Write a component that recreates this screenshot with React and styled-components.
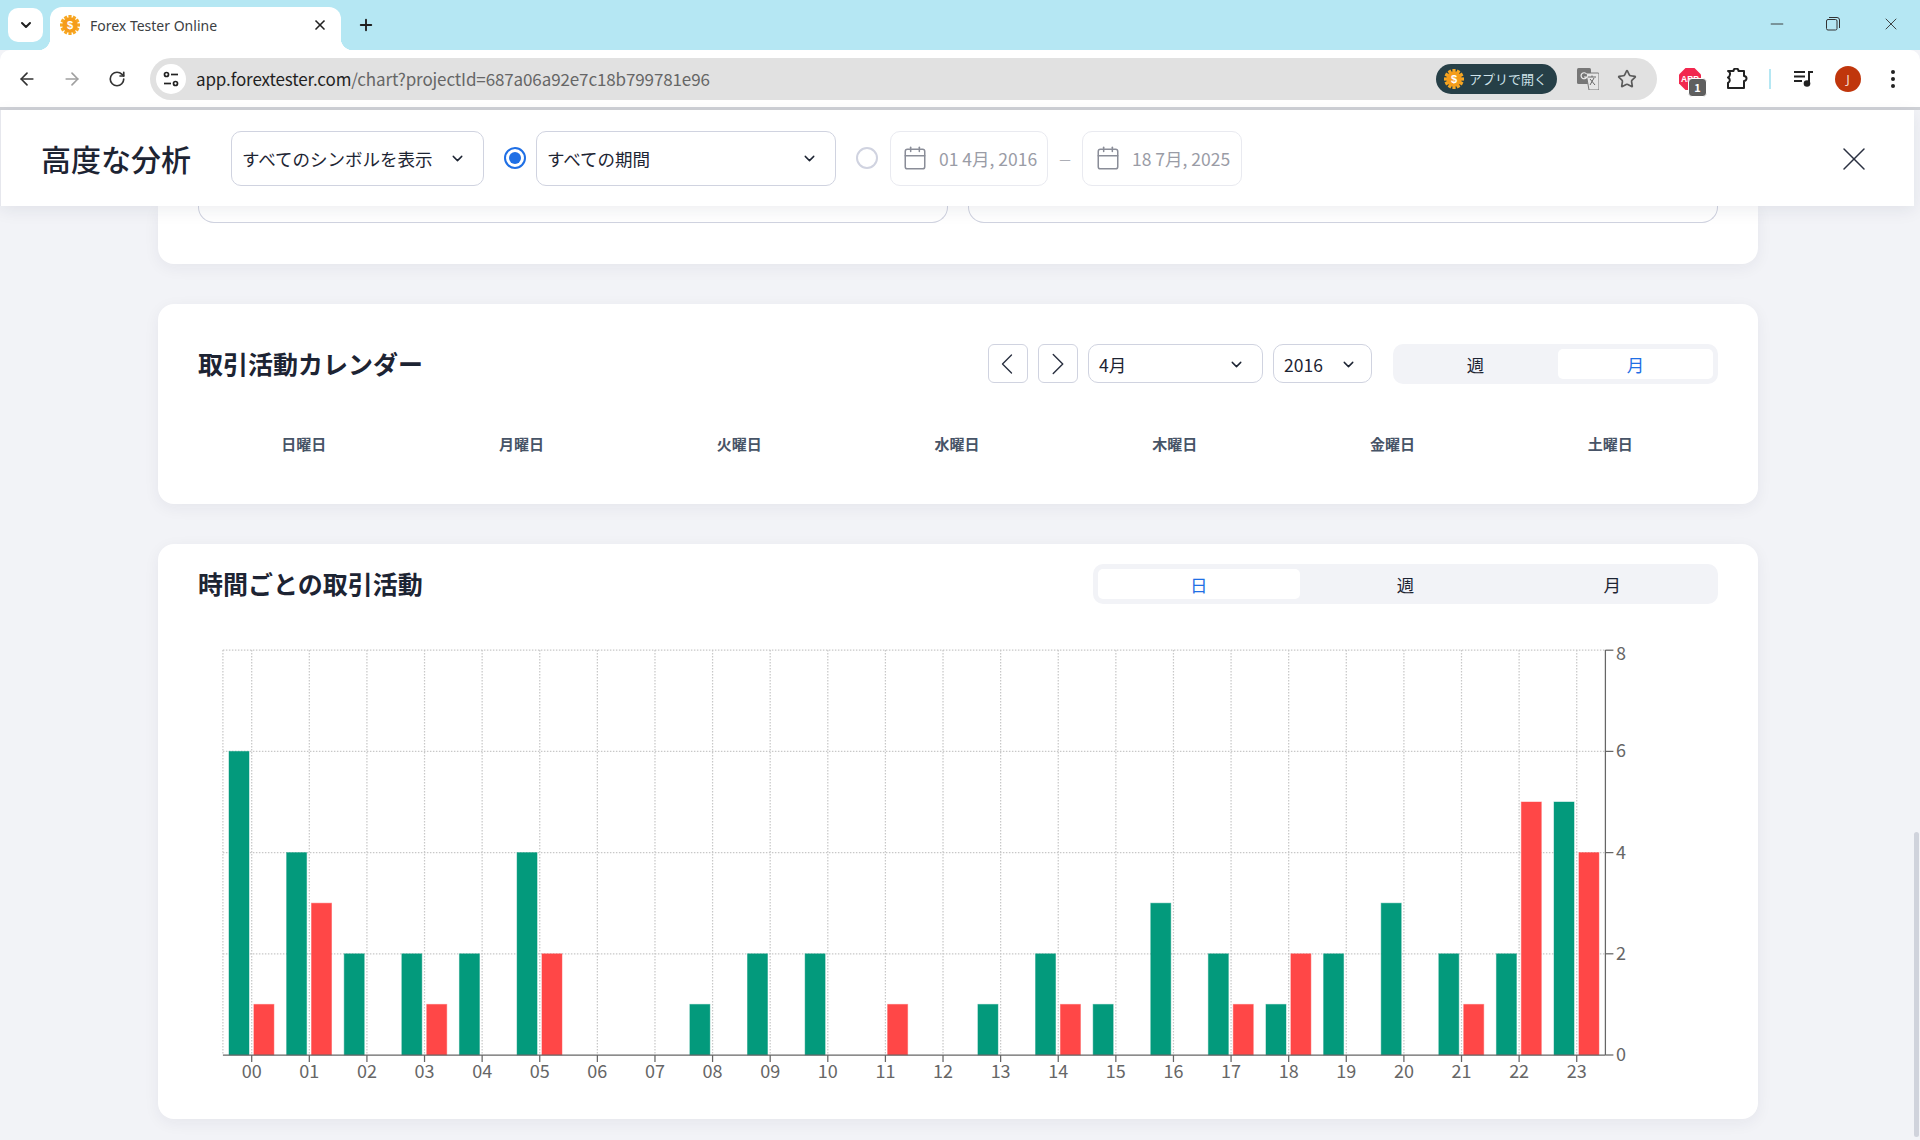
import React from 'react';
import styled, { createGlobalStyle } from 'styled-components';
import { ArrowLeft, ArrowRight, RotateCw, Star, X, Plus, ChevronDown, ChevronLeft, ChevronRight, Calendar, Minus } from 'lucide-react';

const FONT = '"Noto Sans CJK JP", "Noto Sans", sans-serif';

const GlobalStyle = createGlobalStyle`
  html, body { margin: 0; padding: 0; background: #f2f3f7; }
  body { font-family: ${FONT}; color: #1d2433; }
  * { box-sizing: border-box; }
`;

// -------------------------------------------------------------------------
// Browser chrome

const Page = styled.div`
  position: relative;
  width: 1920px;
  height: 1140px;
  overflow: hidden;
  display: flex;
  flex-direction: column;
  background: #f2f3f7;
`;

const TabStrip = styled.div`
  height: 50px;
  flex: none;
  background: #b5e7f3;
  display: flex;
  align-items: flex-end;
  padding-left: 8px;
`;

const TabListButton = styled.div`
  width: 35px;
  height: 34px;
  margin-bottom: 8px;
  background: #fff;
  border-radius: 10px;
  display: flex;
  align-items: center;
  justify-content: center;
  color: #1f1f1f;
`;

const Tab = styled.div`
  position: relative;
  width: 291px;
  height: 43px;
  margin-left: 7px;
  background: #fff;
  border-radius: 12px 12px 0 0;
  display: flex;
  align-items: center;
  padding: 0 13px 7px 10px;
  font-family: "Noto Sans", sans-serif;
  font-size: 14px;
  color: #3c4043;

  &::before,
  &::after {
    content: "";
    position: absolute;
    bottom: 0;
    width: 12px;
    height: 12px;
  }

  &::before {
    left: -12px;
    background: radial-gradient(circle at 0 0, transparent 12px, #fff 12.5px);
  }

  &::after {
    right: -12px;
    background: radial-gradient(circle at 100% 0, transparent 12px, #fff 12.5px);
  }
`;

const TabTitle = styled.span`
  flex: 1;
  margin-left: 10px;
`;

const NewTab = styled.div`
  margin: 0 0 14px 16px;
  height: 22px;
  display: flex;
  align-items: center;
  color: #1f1f1f;
`;

const WindowControls = styled.div`
  margin-left: auto;
  height: 50px;
  display: flex;
  align-items: center;
  padding: 0 19px 3px 0;
  color: #333;
`;

const WindowIcon = styled.div`
  display: flex;
  margin-left: ${(p) => p.$gap}px;
`;

const Toolbar = styled.div`
  height: 57px;
  flex: none;
  background: #fff;
  border-radius: 10px 10px 0 0;
  display: flex;
  align-items: center;
  padding-left: 17px;
`;

const NavIcon = styled.div`
  width: 20px;
  margin-right: ${(p) => p.$gap}px;
  display: flex;
  justify-content: center;
  color: ${(p) => (p.$off ? '#a0a0a0' : '#333')};
`;

const Omnibox = styled.div`
  width: 1507px;
  height: 42px;
  flex: none;
  margin-left: 23px;
  padding: 0 6px 0 6px;
  border-radius: 21px;
  background: #e1e1e1;
  display: flex;
  align-items: center;
`;

const SiteButton = styled.div`
  width: 30px;
  height: 30px;
  border-radius: 50%;
  background: #fff;
  display: flex;
  align-items: center;
  justify-content: center;
`;

const Url = styled.div`
  margin-left: 10px;
  font-size: 17px;
  color: #666;
  letter-spacing: -0.12px;

  b {
    font-weight: 400;
    color: #1f1f1f;
  }
`;

const OpenAppPill = styled.div`
  margin-left: auto;
  width: 121px;
  height: 30px;
  border-radius: 15px;
  background: #263f47;
  color: #cfe3ea;
  font-size: 13px;
  display: flex;
  align-items: center;
  padding-left: 8px;
  gap: 5px;
  white-space: nowrap;
`;

const OmniIcon = styled.div`
  margin-left: ${(p) => p.$gap}px;
  display: flex;
  color: #5a5a5a;
`;

const Extensions = styled.div`
  flex: 1;
  display: flex;
  align-items: center;
  color: #222;
`;

const AbpWrap = styled.div`
  position: relative;
  width: 22px;
  height: 22px;
  margin-left: 22px;
`;

const AbpBadge = styled.div`
  position: absolute;
  left: 9px;
  top: 10px;
  width: 19px;
  height: 19px;
  border-radius: 4px;
  background: #5f5f5f;
  border: 1px solid #fff;
  color: #fff;
  font-size: 11px;
  font-weight: 700;
  line-height: 17px;
  text-align: center;
`;

const AbpLabel = styled.text`
  font-family: "Liberation Sans", sans-serif;
  font-weight: 700;
  font-size: 8.5px;
  fill: #fff;
`;

const FaviconLabel = styled.text`
  font-family: "Liberation Sans", sans-serif;
  font-weight: 700;
  font-size: 11px;
  fill: #fff;
`;

const ExtSlot = styled.div`
  margin-left: ${(p) => p.$gap}px;
  display: flex;
`;

const BlueDivider = styled.div`
  width: 2px;
  height: 20px;
  margin-left: 21px;
  background: #b5e7f3;
`;

const Avatar = styled.div`
  width: 26px;
  height: 26px;
  margin-left: 21px;
  border-radius: 50%;
  background: #c0360c;
  color: #f5d8cd;
  font-family: "Noto Sans", sans-serif;
  font-size: 13px;
  line-height: 26px;
  text-align: center;
`;

const ChromeShadow = styled.div`
  height: 3px;
  flex: none;
  background: #cfd1d6;
`;

// -------------------------------------------------------------------------
// Application

const Main = styled.div`
  flex: 1;
  min-height: 0;
  display: flex;
  flex-direction: column;
`;

const Header = styled.header`
  position: relative;
  z-index: 2;
  height: 96px;
  flex: none;
  margin-right: 6px;
  background: #fff;
  border-left: 1px solid #e6e7ed;
  box-shadow: 0 4px 16px rgba(30, 40, 70, 0.08);
  display: flex;
  align-items: center;
  padding-left: 40px;
  padding-right: 40px;
`;

const PageTitle = styled.h1`
  width: 151px;
  margin: 0 39px 0 0;
  font-size: 30px;
  font-weight: 500;
  white-space: nowrap;
  color: #1d2433;
`;

const Select = styled.div`
  width: ${(p) => p.$w}px;
  height: ${(p) => p.$h || 55}px;
  flex: none;
  margin-left: ${(p) => p.$ml || 0}px;
  padding: ${(p) => p.$pt || 0}px ${(p) => p.$pr || 17}px 0 10px;
  background: #fff;
  border: 1px solid #d0d3e0;
  border-radius: 10px;
  display: flex;
  align-items: center;
  justify-content: space-between;
  font-size: 17.5px;
  white-space: nowrap;
  color: #1d2433;
`;

const Radio = styled.div`
  width: 22px;
  height: 22px;
  flex: none;
  margin: ${(p) => p.$margin};
  border-radius: 50%;
  background: #fff;
  border: ${(p) => (p.$on ? '2px solid #1f6fe5' : '2px solid #d0d3e0')};
  display: flex;
  align-items: center;
  justify-content: center;

  &::after {
    content: "";
    display: ${(p) => (p.$on ? 'block' : 'none')};
    width: 12px;
    height: 12px;
    border-radius: 50%;
    background: #1f6fe5;
  }
`;

const DateBox = styled.div`
  width: ${(p) => p.$w}px;
  height: 55px;
  flex: none;
  padding-left: ${(p) => p.$pl}px;
  border: 1px solid #e9eaf0;
  border-radius: 10px;
  display: flex;
  align-items: center;
  gap: 11px;
  font-size: 17.5px;
  white-space: nowrap;
  color: #9a9ca6;
`;

const DateDash = styled.div`
  width: 34px;
  flex: none;
  text-align: center;
  font-size: 13px;
  color: #9a9ca6;
`;

const CloseButton = styled.div`
  margin: 1px 0 0 auto;
  display: flex;
  color: #2a3040;
`;

const Content = styled.div`
  flex: 1;
  min-height: 0;
  padding: 0 162px 0 158px;
  display: flex;
  flex-direction: column;
  gap: 40px;
`;

const Card = styled.section`
  flex: none;
  height: ${(p) => p.$h || 'auto'};
  background: #fff;
  border-radius: 16px;
  box-shadow: 0 4px 16px rgba(30, 40, 70, 0.06);
  padding: ${(p) => p.$padding};
`;

const StubCard = styled(Card)`
  border-radius: 0 0 16px 16px;
  height: 58px;
  display: grid;
  grid-template-columns: 750px 750px;
  justify-content: space-between;
  padding: 0 40px;
`;

const StubBox = styled.div`
  height: 17px;
  border: 1px solid #d0d3e0;
  border-top: none;
  border-radius: 0 0 16px 16px;
`;

const CardHeader = styled.div`
  display: flex;
  align-items: center;
  height: ${(p) => p.$h}px;
`;

const CardTitle = styled.h2`
  margin: -2px auto 0 0;
  font-size: 25px;
  font-weight: 700;
  color: #1d2433;
  white-space: nowrap;
`;

const ArrowButton = styled.div`
  width: 40px;
  height: 39px;
  margin-right: 10px;
  padding-right: ${(p) => (p.$left ? 2 : 0)}px;
  background: #fff;
  border: 1px solid #d0d3e0;
  border-radius: 6px;
  display: flex;
  align-items: center;
  justify-content: center;
  color: #2a3040;
`;

const Segmented = styled.div`
  width: ${(p) => p.$w}px;
  height: 40px;
  margin-left: ${(p) => p.$ml || 0}px;
  padding: 5px;
  background: #f2f3f7;
  border-radius: 10px;
  display: grid;
  grid-auto-flow: column;
  grid-auto-columns: 1fr;
  gap: 5px;
`;

const Segment = styled.div`
  border-radius: 5px;
  background: ${(p) => (p.$active ? '#fff' : 'transparent')};
  color: ${(p) => (p.$active ? '#1f6fe5' : '#1d2433')};
  font-size: 17.5px;
  line-height: 32px;
  height: 30px;
  text-align: center;
`;

const WeekRow = styled.div`
  display: grid;
  grid-template-columns: repeat(7, 1fr);
  width: 1524px;
  margin: 51px 0 0 -3px;
`;

const WeekDay = styled.div`
  text-align: center;
  font-size: 15px;
  font-weight: 700;
  line-height: 20px;
  color: #475467;
`;

const ChartSvg = styled.svg`
  display: block;
  margin-top: 30px;
`;

const TickLabel = styled.text`
  font-family: ${FONT};
  font-size: 18px;
  fill: #666;
`;

const ScrollThumb = styled.div`
  position: absolute;
  right: 1px;
  top: 832px;
  width: 5px;
  height: 305px;
  border-radius: 3px;
  background: #d0d3dc;
`;

// -------------------------------------------------------------------------
// Drawings

function Favicon({ size }) {
  const teeth = Array.from({ length: 12 }, (_, i) => i * 30);
  return (
    <svg width={size} height={size} viewBox="0 0 20 20">
      {teeth.map((a) => (
        <rect key={a} x="8.4" y="0" width="3.2" height="5" fill="#f7a823" transform={`rotate(${a} 10 10)`} />
      ))}
      <circle cx="10" cy="10" r="7.6" fill="#f59c1a" />
      <FaviconLabel x="10" y="14" textAnchor="middle">$</FaviconLabel>
    </svg>
  );
}

function SiteTune() {
  return (
    <svg width="18" height="18" viewBox="0 0 18 18" fill="none" stroke="#222" strokeWidth="1.7">
      <circle cx="4.5" cy="4.5" r="2" />
      <path d="M9 4.5h7" />
      <circle cx="13.5" cy="13.5" r="2" />
      <path d="M2 13.5h7" />
    </svg>
  );
}

function TranslateIcon() {
  return (
    <svg width="22" height="22" viewBox="0 0 22 22">
      <rect x="0" y="0" width="14" height="16" rx="1.5" fill="#777" />
      <path d="M9 5h12a1 1 0 0 1 1 1v15a1 1 0 0 1-1 1H12z" fill="#e6e6e6" stroke="#777" />
      <path d="M11 9h8M15 7.5v1.5M13 17l4-7M13 11l5 6" fill="none" stroke="#666" strokeWidth="1" />
      <path d="M9.5 6a3 3 0 1 0 .3 3H7" fill="none" stroke="#eee" strokeWidth="1.2" />
    </svg>
  );
}

function PuzzleIcon() {
  return (
    <svg width="22" height="22" viewBox="0 0 22 22" fill="none" stroke="#222" strokeWidth="2" strokeLinejoin="round">
      <path d="M2 3h5.5a2.5 2.5 0 0 1 5 0H18v5a2.5 2.5 0 0 1 0 5v7H2v-5a3 3 0 0 0 0-5.500 3 3 0 0 0 1.800-2.500A3 3 0 0 0 2 3z" />
    </svg>
  );
}

function MediaIcon() {
  return (
    <svg width="20" height="18" viewBox="0 0 20 18" fill="#222">
      <rect x="0" y="1" width="11" height="2" />
      <rect x="0" y="5.500" width="11" height="2" />
      <rect x="0" y="10" width="8" height="2" />
      <rect x="14" y="1" width="2" height="12" />
      <rect x="14" y="1" width="5" height="2" />
      <circle cx="13" cy="13.500" r="3.300" />
    </svg>
  );
}

function DotsIcon() {
  return (
    <svg width="6" height="20" viewBox="0 0 6 20" fill="#222">
      <circle cx="3" cy="3" r="2" />
      <circle cx="3" cy="10" r="2" />
      <circle cx="3" cy="17" r="2" />
    </svg>
  );
}

function RestoreIcon() {
  return (
    <svg width="14" height="14" viewBox="0 0 14 14" fill="none" stroke="#333" strokeWidth="1">
      <rect x="0.500" y="2.500" width="10.500" height="10.500" rx="1.500" />
      <path d="M3 .500h8a2.500 2.500 0 0 1 2.500 2.500v8" />
    </svg>
  );
}

// -------------------------------------------------------------------------
// Chart

const GREEN = [6, 4, 2, 2, 2, 4, 0, 0, 1, 2, 2, 0, 0, 1, 2, 1, 3, 2, 1, 2, 3, 2, 2, 5];
const RED = [1, 3, 0, 1, 0, 2, 0, 0, 0, 0, 0, 1, 0, 0, 1, 0, 0, 1, 2, 0, 0, 1, 5, 4];

const STEP = 57.61;
const X0 = 251.7;
const BOTTOM = 1055;
const UNIT = 50.6;
const LEFT = 222.9;
const RIGHT = 1605.4;

function Bars({ values, offset, color }) {
  return values.map((v, i) =>
    v > 0 ? (
      <rect
        key={i}
        x={X0 + STEP * i + offset}
        y={BOTTOM - v * UNIT}
        width="20"
        height={v * UNIT}
        fill={color}
        stroke={color}
        strokeOpacity="0.45"
        strokeWidth="1"
      />
    ) : null
  );
}

function HourlyChart() {
  const hours = Array.from({ length: 24 }, (_, i) => i);
  const levels = [0, 2, 4, 6, 8];
  return (
    <ChartSvg width="1520" height="450" viewBox="198 634 1520 450">
      <g stroke="#c8c8c8" strokeWidth="1.25" strokeDasharray="1.5 1.5">
        {levels.slice(1).map((l) => (
          <line key={l} x1={LEFT} x2={RIGHT} y1={BOTTOM - l * UNIT} y2={BOTTOM - l * UNIT} />
        ))}
        <line x1={LEFT} x2={LEFT} y1={650} y2={BOTTOM} />
        {hours.map((h) => (
          <line key={h} x1={X0 + STEP * h} x2={X0 + STEP * h} y1={650} y2={BOTTOM} />
        ))}
      </g>
      <Bars values={GREEN} offset={-22.7} color="#039a7c" />
      <Bars values={RED} offset={2.2} color="#ff4747" />
      <g stroke="#666" strokeWidth="1.25">
        <line x1={LEFT} x2={RIGHT} y1={BOTTOM} y2={BOTTOM} />
        <line x1={RIGHT} x2={RIGHT} y1={650} y2={BOTTOM} />
        {hours.map((h) => (
          <line key={h} x1={X0 + STEP * h} x2={X0 + STEP * h} y1={BOTTOM} y2={BOTTOM + 7} />
        ))}
        {levels.map((l) => (
          <line key={l} x1={RIGHT} x2={RIGHT + 8} y1={BOTTOM - l * UNIT} y2={BOTTOM - l * UNIT} />
        ))}
      </g>
      {hours.map((h) => (
        <TickLabel key={h} x={X0 + STEP * h} y={1078} textAnchor="middle">
          {String(h).padStart(2, '0')}
        </TickLabel>
      ))}
      {levels.map((l) => (
        <TickLabel key={l} x={1616} y={l === 8 ? 660 : BOTTOM - l * UNIT + 6}>
          {l}
        </TickLabel>
      ))}
    </ChartSvg>
  );
}

// -------------------------------------------------------------------------
// Page

export default function App() {
  return (
    <Page>
      <GlobalStyle />
      <TabStrip>
        <TabListButton>
          <ChevronDown size={16} strokeWidth={3} />
        </TabListButton>
        <Tab>
          <Favicon size={20} />
          <TabTitle>Forex Tester Online</TabTitle>
          <X size={16} strokeWidth={2.5} color="#222" />
        </Tab>
        <NewTab>
          <Plus size={18} strokeWidth={2.5} />
        </NewTab>
        <WindowControls>
          <WindowIcon $gap={0}><Minus size={20} strokeWidth={1.1} /></WindowIcon>
          <WindowIcon $gap={39}><RestoreIcon /></WindowIcon>
          <WindowIcon $gap={41}><X size={20} strokeWidth={1.1} /></WindowIcon>
        </WindowControls>
      </TabStrip>
      <Toolbar>
        <NavIcon $gap={25}><ArrowLeft size={20} strokeWidth={2} /></NavIcon>
        <NavIcon $gap={25} $off><ArrowRight size={20} strokeWidth={2} /></NavIcon>
        <NavIcon $gap={0}><RotateCw size={18} strokeWidth={2.2} /></NavIcon>
        <Omnibox>
          <SiteButton><SiteTune /></SiteButton>
          <Url><b>app.forextester.com</b>/chart?projectId=687a06a92e7c18b799781e96</Url>
          <OpenAppPill>
            <Favicon size={20} />
            アプリで開く
          </OpenAppPill>
          <OmniIcon $gap={20}><TranslateIcon /></OmniIcon>
          <OmniIcon $gap={18}><Star size={20} strokeWidth={2} /></OmniIcon>
          <OmniIcon $gap={14} />
        </Omnibox>
        <Extensions>
          <AbpWrap>
            <svg width="22" height="22" viewBox="0 0 22 22">
              <polygon points="6.500,0 15.500,0 22,6.500 22,15.500 15.500,22 6.500,22 0,15.500 0,6.500" fill="#f2284f" />
              <AbpLabel x="11" y="14" textAnchor="middle">ABP</AbpLabel>
            </svg>
            <AbpBadge>1</AbpBadge>
          </AbpWrap>
          <ExtSlot $gap={25}><PuzzleIcon /></ExtSlot>
          <BlueDivider />
          <ExtSlot $gap={23}><MediaIcon /></ExtSlot>
          <Avatar>J</Avatar>
          <ExtSlot $gap={29}><DotsIcon /></ExtSlot>
        </Extensions>
      </Toolbar>
      <ChromeShadow />
      <Main>
        <Header>
          <PageTitle>高度な分析</PageTitle>
          <Select $w={253}>
            すべてのシンボルを表示
            <ChevronDown size={17} strokeWidth={2} />
          </Select>
          <Radio $on $margin="0 10px 0 20px" />
          <Select $w={300}>
            すべての期間
            <ChevronDown size={17} strokeWidth={2} />
          </Select>
          <Radio $margin="0 12px 0 20px" />
          <DateBox $w={158} $pl={11}>
            <Calendar size={26} strokeWidth={1.4} color="#8a8d98" />
            01 4月, 2016
          </DateBox>
          <DateDash>—</DateDash>
          <DateBox $w={160} $pl={12}>
            <Calendar size={26} strokeWidth={1.4} color="#8a8d98" />
            18 7月, 2025
          </DateBox>
          <CloseButton><X size={40} strokeWidth={0.9} /></CloseButton>
        </Header>
        <Content>
          <StubCard>
            <StubBox />
            <StubBox />
          </StubCard>
          <Card $padding="40px 40px 0" $h="200px">
            <CardHeader $h={39}>
              <CardTitle>取引活動カレンダー</CardTitle>
              <ArrowButton $left><ChevronLeft size={38} strokeWidth={0.9} /></ArrowButton>
              <ArrowButton><ChevronRight size={38} strokeWidth={0.9} /></ArrowButton>
              <Select $w={175} $h={39} $pt={2}>
                4月
                <ChevronDown size={17} strokeWidth={2} />
              </Select>
              <Select $w={99} $h={39} $pt={2} $pr={14} $ml={10}>
                2016
                <ChevronDown size={17} strokeWidth={2} />
              </Select>
              <Segmented $w={325} $ml={21}>
                <Segment>週</Segment>
                <Segment $active>月</Segment>
              </Segmented>
            </CardHeader>
            <WeekRow>
              {['日曜日', '月曜日', '火曜日', '水曜日', '木曜日', '金曜日', '土曜日'].map((d) => (
                <WeekDay key={d}>{d}</WeekDay>
              ))}
            </WeekRow>
          </Card>
          <Card $padding="20px 40px 35px">
            <CardHeader $h={40}>
              <CardTitle>時間ごとの取引活動</CardTitle>
              <Segmented $w={625}>
                <Segment $active>日</Segment>
                <Segment>週</Segment>
                <Segment>月</Segment>
              </Segmented>
            </CardHeader>
            <HourlyChart />
          </Card>
        </Content>
      </Main>
      <ScrollThumb />
    </Page>
  );
}
